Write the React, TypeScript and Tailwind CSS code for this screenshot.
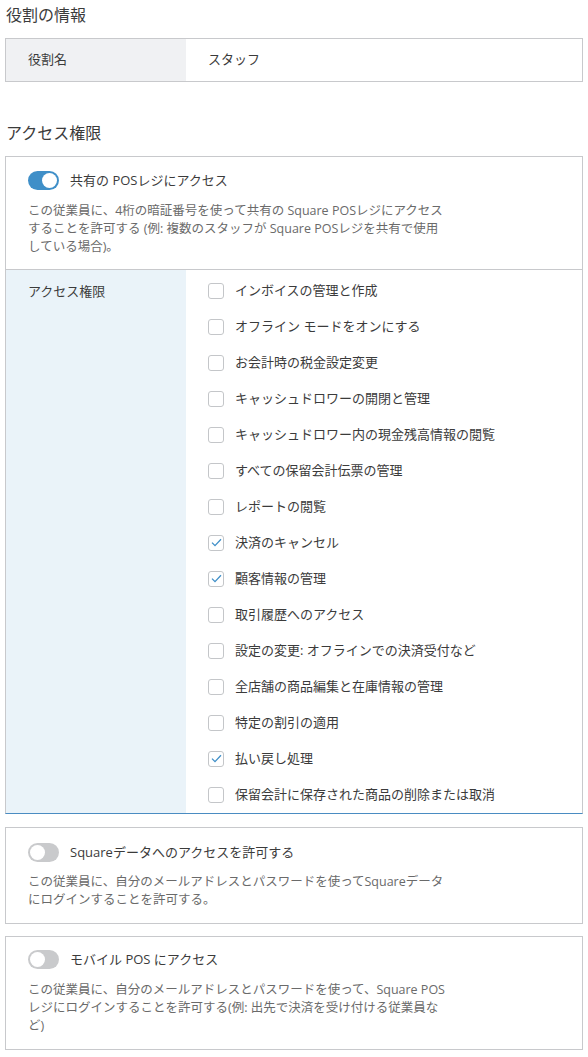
import React, { useState } from 'react'

const permissions: { label: string; checked: boolean }[] = [
  { label: 'インボイスの管理と作成', checked: false },
  { label: 'オフライン モードをオンにする', checked: false },
  { label: 'お会計時の税金設定変更', checked: false },
  { label: 'キャッシュドロワーの開閉と管理', checked: false },
  { label: 'キャッシュドロワー内の現金残高情報の閲覧', checked: false },
  { label: 'すべての保留会計伝票の管理', checked: false },
  { label: 'レポートの閲覧', checked: false },
  { label: '決済のキャンセル', checked: true },
  { label: '顧客情報の管理', checked: true },
  { label: '取引履歴へのアクセス', checked: false },
  { label: '設定の変更: オフラインでの決済受付など', checked: false },
  { label: '全店舗の商品編集と在庫情報の管理', checked: false },
  { label: '特定の割引の適用', checked: false },
  { label: '払い戻し処理', checked: true },
  { label: '保留会計に保存された商品の削除または取消', checked: false },
]

const Toggle: React.FC<{ on: boolean }> = ({ on }) => (
  <span
    className={`relative inline-block h-[19px] w-[31px] shrink-0 rounded-full ${
      on ? 'bg-[#3f8fc8]' : 'bg-[#c9cacc]'
    }`}
  >
    <span
      className={`absolute top-[2px] h-[15px] w-[15px] rounded-full bg-white ${
        on ? 'left-[14px]' : 'left-[2px]'
      }`}
    />
  </span>
)

const CheckBox: React.FC<{ checked: boolean }> = ({ checked }) => (
  <span className="flex h-[16px] w-[16px] shrink-0 items-center justify-center rounded-[3px] border border-[#c4c6c9] bg-white">
    {checked && (
      <svg width="11" height="9" viewBox="0 0 11 9" fill="none">
        <path d="M1 4.6L4 7.6L10 1.2" stroke="#3f8fc8" strokeWidth="1.3" />
      </svg>
    )}
  </span>
)

const App: React.FC = () => {
  const [items] = useState(permissions)

  return (
    <div className="w-[588px] bg-white font-['Open_Sans','Noto_Sans_CJK_JP',sans-serif] text-[#3b3b3b]">
      {/* 役割の情報 */}
      <h2 className="pl-[6px] pt-[4px] text-[16px] leading-[22px]">役割の情報</h2>
      <div className="mx-[5px] mt-[12px] flex h-[44px] border border-[#c8c9cc] text-[13px]">
        <div className="flex w-[180px] items-center bg-[#f0f1f3] pl-[22px]">役割名</div>
        <div className="flex items-center pl-[22px]">スタッフ</div>
      </div>

      {/* アクセス権限 */}
      <h2 className="mt-[40px] pl-[6px] text-[16px] leading-[22px]">アクセス権限</h2>
      <div className="mx-[5px] mt-[12px] border border-[#c8c9cc] border-b-[#4a8cc2]">
        <div className="px-[22px] pb-[13px] pt-[14px]">
          <div className="flex items-center gap-[11px] text-[13px]">
            <Toggle on={true} />
            <span>共有の POSレジにアクセス</span>
          </div>
          <p className="mt-[11px] whitespace-nowrap text-[12.5px] leading-[18px] text-[#6a6a6a]">
            この従業員に、4桁の暗証番号を使って共有の Square POSレジにアクセス
            <br />
            することを許可する (例: 複数のスタッフが Square POSレジを共有で使用
            <br />
            している場合)。
          </p>
        </div>
        <div className="flex border-t border-[#c8c9cc]">
          <div className="w-[180px] bg-[#eaf3f9] pl-[22px] pt-[12px] text-[13px]">アクセス権限</div>
          <ul className="flex-1 pt-[3px]">
            {items.map((p) => (
              <li key={p.label} className="flex h-[36px] items-center gap-[11px] pl-[22px] text-[13px]">
                <CheckBox checked={p.checked} />
                <span>{p.label}</span>
              </li>
            ))}
          </ul>
        </div>
      </div>

      {/* Squareデータ */}
      <div className="mx-[5px] mt-[13px] border border-[#c8c9cc] px-[22px] pb-[14px] pt-[15px]">
        <div className="flex items-center gap-[11px] text-[13px]">
          <Toggle on={false} />
          <span>Squareデータへのアクセスを許可する</span>
        </div>
        <p className="mt-[11px] whitespace-nowrap text-[12.5px] leading-[18px] text-[#6a6a6a]">
          この従業員に、自分のメールアドレスとパスワードを使ってSquareデータ
          <br />
          にログインすることを許可する。
        </p>
      </div>

      {/* モバイル POS */}
      <div className="mx-[5px] mt-[12px] border border-[#c8c9cc] px-[22px] pb-[14px] pt-[13px]">
        <div className="flex items-center gap-[11px] text-[13px]">
          <Toggle on={false} />
          <span>モバイル POS にアクセス</span>
        </div>
        <p className="mt-[11px] whitespace-nowrap text-[12.5px] leading-[18px] text-[#6a6a6a]">
          この従業員に、自分のメールアドレスとパスワードを使って、Square POS
          <br />
          レジにログインすることを許可する(例: 出先で決済を受け付ける従業員な
          <br />
          ど)
        </p>
      </div>
    </div>
  )
}

export default App
